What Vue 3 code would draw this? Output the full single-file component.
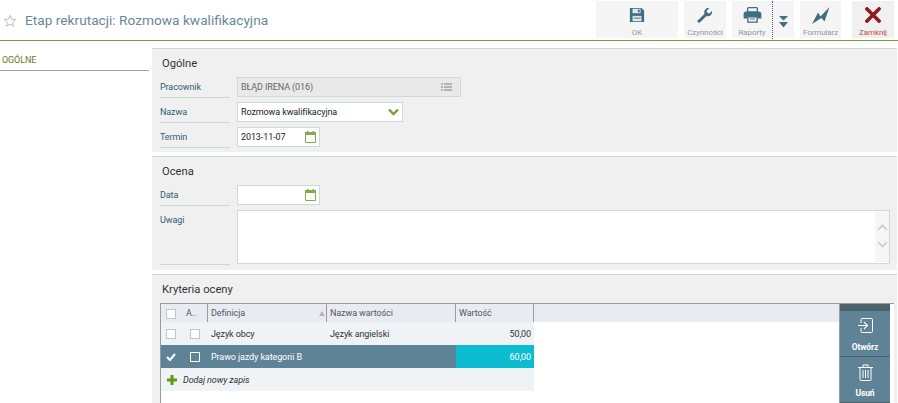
<script setup>
const rows = [
  { sel: false, def: 'Język obcy', name: 'Język angielski', val: '50,00' },
  { sel: true, def: 'Prawo jazdy kategorii B', name: '', val: '60,00' }
]
</script>

<template>
  <div class="page">
    <header class="top">
      <svg class="star" width="14" height="14" viewBox="0 0 16 16"><path d="M8 1.500l1.900 4.400 4.700.4-3.600 3.100 1.100 4.600L8 11.600 3.900 14l1.100-4.600-3.600-3.100 4.700-.4z" fill="none" stroke="#b4bcc0" stroke-width="1.100"/></svg>
      <h1>Etap rekrutacji: Rozmowa kwalifikacyjna</h1>
      <div class="tools">
        <div class="tool w82">
          <svg width="16" height="16" viewBox="0 0 18 18"><path d="M1 1h13l3 3v13H1z" fill="#3f6e82"/><rect x="4" y="2" width="9" height="5" fill="#dfe7eb"/><rect x="10" y="3" width="2" height="3" fill="#3f6e82"/><rect x="4" y="10" width="10" height="6" fill="#dfe7eb"/><rect x="5" y="12" width="8" height="1" fill="#3f6e82"/></svg>
          <span>OK</span>
        </div>
        <div class="tool w42">
          <svg width="16" height="16" viewBox="0 0 18 18"><path d="M1.500 14.500l7-7a4.500 4.500 0 0 1 5.500-6l-3 2.500.5 2.500 2.500.7 2.700-2.700a4.500 4.500 0 0 1-6 5.500l-7 7a1.700 1.700 0 0 1-2.700-2.500z" fill="#3f6e82"/></svg>
          <span>Czynności</span>
        </div>
        <div class="tool w62 split">
          <div class="main-part">
            <svg width="19" height="16" viewBox="0 0 20 18"><rect x="4.500" y="0.750" width="11" height="5" rx="1" fill="none" stroke="#3f6e82" stroke-width="1.500"/><path d="M3 5h14a3 3 0 0 1 3 3v5h-4v-3H4v3H0V8a3 3 0 0 1 3-3z" fill="#3f6e82"/><path d="M4.750 11h10.500v6H4.750z" fill="none" stroke="#3f6e82" stroke-width="1.500"/><rect x="7" y="13" width="6" height="1" fill="#3f6e82"/></svg>
            <span>Raporty</span>
          </div>
          <div class="more">
            <svg width="9" height="13" viewBox="0 0 9 13"><path d="M0 1h9L4.500 5.500zM0 7h9L4.500 12.500z" fill="#3f6e82"/></svg>
          </div>
        </div>
        <div class="tool w41 push">
          <svg width="18" height="17" viewBox="0 0 18 17"><path d="M0 17L6 5.500l2.500 4L17.500 0l-5 14.500L9.500 11z" fill="#3f6e82"/></svg>
          <span class="f">Formularz</span>
        </div>
        <div class="tool w42 close">
          <svg width="16" height="16" viewBox="0 0 16 16"><path d="M2 2l12 12M14 2L2 14" stroke="#8e1b22" stroke-width="3.600" stroke-linecap="square"/></svg>
          <span>Zamknij</span>
        </div>
      </div>
    </header>

    <div class="body">
      <aside class="side"><div class="tab">OGÓLNE</div></aside>
      <main class="main">
        <section class="sec one">
          <h2>Ogólne</h2>
          <div class="row r1">
            <label>Pracownik</label>
            <div class="field ro wide">
              <span>BŁĄD IRENA (016)</span>
              <svg width="11" height="8" viewBox="0 0 11 8"><path d="M0 1h2M3 1h8M0 4h2M3 4h8M0 7h2M3 7h8" stroke="#9aa3a7" stroke-width="1.300"/></svg>
            </div>
          </div>
          <div class="row">
            <label>Nazwa</label>
            <div class="field mid">
              <span>Rozmowa kwalifikacyjna</span>
              <svg width="11" height="8" viewBox="0 0 11 8"><path d="M1 1.500l4.500 4.500L10 1.500" fill="none" stroke="#75a136" stroke-width="2.400"/></svg>
            </div>
          </div>
          <div class="row">
            <label>Termin</label>
            <div class="field date">
              <span>2013-11-07</span>
              <svg width="11" height="12" viewBox="0 0 11 12" class="cal"><path d="M.5 1.500h10v10H.5z" fill="#fff" stroke="#7fae4b"/><path d="M0 1h2V0h1.500v1h4V0H9v1h2v3H0z" fill="#7fae4b"/></svg>
            </div>
          </div>
        </section>

        <section class="sec two">
          <h2>Ocena</h2>
          <div class="row">
            <label>Data</label>
            <div class="field date">
              <span></span>
              <svg width="11" height="12" viewBox="0 0 11 12" class="cal"><path d="M.5 1.500h10v10H.5z" fill="#fff" stroke="#7fae4b"/><path d="M0 1h2V0h1.500v1h4V0H9v1h2v3H0z" fill="#7fae4b"/></svg>
            </div>
          </div>
          <div class="row tall">
            <label>Uwagi</label>
            <div class="field area">
              <div class="scroll">
                <svg width="11" height="7" viewBox="0 0 11 7"><path d="M1 6l4.500-4.500L10 6" fill="none" stroke="#c8cccd" stroke-width="1.600"/></svg>
                <svg width="11" height="7" viewBox="0 0 11 7"><path d="M1 1l4.500 4.500L10 1" fill="none" stroke="#c8cccd" stroke-width="1.600"/></svg>
              </div>
            </div>
          </div>
        </section>

        <section class="sec three">
          <h2>Kryteria oceny</h2>
          <div class="gridwrap">
            <div class="grid">
              <div class="ghead">
                <div class="c-check"><i class="box"></i></div>
                <div class="c-a">A..</div>
                <div class="c-def">Definicja<em class="sort"></em></div>
                <div class="c-name">Nazwa wartości</div>
                <div class="c-val">Wartość</div>
                <div class="c-rest"></div>
              </div>
              <div v-for="r in rows" :key="r.def" class="grow" :class="{ sel: r.sel }">
                <div class="d-check">
                  <svg v-if="r.sel" width="10" height="8" viewBox="0 0 10 8"><path d="M1 4l3 3 5-6" fill="none" stroke="#fff" stroke-width="2"/></svg>
                  <i v-else class="box"></i>
                </div>
                <div class="d-a"><i class="box"></i></div>
                <div class="d-def">{{ r.def }}</div>
                <div class="d-name">{{ r.name }}</div>
                <div class="d-val">{{ r.val }}</div>
              </div>
              <div class="gadd">
                <svg width="10" height="10" viewBox="0 0 10 10"><path d="M3.500 0h3v3.500H10v3H6.500V10h-3V6.500H0v-3h3.500z" fill="#5f9a12"/></svg>
                <span>Dodaj nowy zapis</span>
              </div>
            </div>
            <div class="actions">
              <div class="cap"></div>
              <div class="act">
                <svg width="15" height="15" viewBox="0 0 15 15"><path d="M3 5V1.500a1 1 0 0 1 1-1h9.500a1 1 0 0 1 1 1v12a1 1 0 0 1-1 1H4a1 1 0 0 1-1-1V10" fill="none" stroke="#fff" stroke-width="1"/><path d="M0 7.500h9M6 4l3.500 3.500L6 11" fill="none" stroke="#fff" stroke-width="1.100"/></svg>
                <span>Otwórz</span>
              </div>
              <div class="act del">
                <svg width="15" height="17" viewBox="0 0 15 17"><path d="M0 3.500h15M5 3V1h5v2M2 4v11.500a1 1 0 0 0 1 1h9a1 1 0 0 0 1-1V4M5 6v8M7.500 6v8M10 6v8" fill="none" stroke="#fff" stroke-width="1"/></svg>
                <span>Usuń</span>
              </div>
            </div>
          </div>
        </section>
      </main>
    </div>
  </div>
</template>

<style>
html, body { margin: 0; background: #fff; overflow: hidden; }
</style>

<style scoped>
.page { width: 898px; height: 403px; overflow: hidden; font-family: Roboto, "Open Sans", sans-serif; font-size: 9px; letter-spacing: -0.100px; color: #333; background: #fff; }
.top { height: 40px; border-bottom: 1px solid #7a9e35; display: flex; align-items: center; position: relative; }
.star { margin-left: 3px; margin-top: 1px; }
h1 { margin: 0 0 0 8px; font-size: 13.700px; letter-spacing: 0; font-weight: 400; color: #6a8796; flex: 1; }
.tools { display: flex; height: 38px; align-self: flex-start; margin-top: 1px; margin-right: 4px; gap: 6px; }
.tool { background: #f5f5f5; display: flex; flex-direction: column; align-items: center; padding-top: 6px; box-sizing: border-box; height: 37px; gap: 2px; }
.tool span { font-size: 8px; color: #8a9aa3; line-height: 11px; margin-top: 2px; }
.tool span.f { margin-top: 1px; }
.w82 { width: 82px; }
.w42 { width: 42px; }
.w41 { width: 41px; }
.w62 { width: 62px; }
.push { margin-right: 5px; }
.split { flex-direction: row; padding: 0; align-items: stretch; gap: 0; }
.main-part { width: 41px; display: flex; flex-direction: column; align-items: center; padding-top: 6px; border-right: 1px dotted #3c6a80; height: 38px; box-sizing: border-box; gap: 2px; }
.more { flex: 1; display: flex; align-items: center; justify-content: center; padding-top: 3px; }
.close { background: #f0f0f0; }
.close span { color: #c0484c; }
.body { display: flex; padding-top: 7px; }
.side { width: 149px; flex: none; }
.tab { height: 23px; border-bottom: 1px solid #9aa6ac; color: #6b7a1e; padding: 5px 0 0 2px; box-sizing: border-box; line-height: 14px; }
.main { flex: 1; margin-left: 3px; margin-right: 1px; display: flex; flex-direction: column; gap: 4px; }
.sec { background: #f0f0f0; border-top: 1px solid #c8d8dc; padding: 0 3px 0 8px; box-sizing: border-box; }
.one { height: 104px; }
.two { height: 114px; }
.three { height: 130px; }
h2 { margin: 0 0 6px; font-size: 11.200px; letter-spacing: 0; font-weight: 400; color: #333; line-height: 15px; padding: 7px 0 0 2px; }
.row { display: flex; margin: 0 4px 5px 0; gap: 7px; height: 20px; }
label { width: 70px; border-bottom: 1px solid #c8dad6; color: #2f6070; line-height: 21px; height: 21px; box-sizing: border-box; flex: none; }
.field { border: 1px solid #c9dcd7; background: #fff; display: flex; align-items: center; justify-content: space-between; box-sizing: border-box; height: 20px; padding: 0 3px; color: #222; }
.ro { background: #e9e9e9; color: #666; }
.wide { width: 224px; flex: none; padding-right: 8px; }
.mid { width: 166px; }
.date { width: 83px; }
.row.tall { height: 54px; }
.tall label { height: 55px; }
.area { flex: 1; height: 54px; align-items: flex-start; justify-content: flex-end; padding: 0; }
.scroll { width: 14px; height: 51px; background: #f6f6f6; display: flex; flex-direction: column; align-items: center; gap: 10px; padding-top: 13px; box-sizing: border-box; }
.gridwrap { display: flex; height: 100px; background: #fff; padding-right: 4px; border-top: 1px solid #9a9aa2; border-left: 1px solid #9a9aa2; box-sizing: border-box; }
.grid { flex: 1; background: #fff; }
.ghead { display: flex; height: 18px; background: #e8ebef; color: #556; line-height: 19px; }
.ghead > div { box-sizing: border-box; border-right: 1px solid #9a9aa2; }
.c-check { width: 0; position: relative; border: 0 !important; }
.c-check .box { position: absolute; left: 5px; top: 5px; }
.c-a { width: 47px; padding-left: 25px; }
.c-def { width: 119px; padding-left: 3px; position: relative; }
.c-name { width: 129px; padding-left: 3px; }
.c-val { width: 78px; padding-left: 3px; }
.c-rest { flex: 1; border: 0 !important; }
.sort { position: absolute; right: 1px; top: 7px; border: 3.500px solid transparent; border-top: 0; border-bottom: 5px solid #b0b4b8; }
.box { display: inline-block; width: 8px; height: 8px; border: 1px solid #c0c6c8; background: #fff; }
.grow { display: flex; width: 373px; height: 23px; align-items: center; background: #eff3f6; color: #333; }
.grow.sel { background: #5f8396; color: #fff; }
.d-check { width: 29px; padding-left: 5px; box-sizing: border-box; display: flex; }
.d-a { width: 18px; display: flex; }
.d-def { width: 119px; padding: 1px 0 0 3px; box-sizing: border-box; white-space: nowrap; }
.d-name { width: 129px; padding: 1px 0 0 3px; box-sizing: border-box; }
.d-val { width: 78px; height: 100%; box-sizing: border-box; text-align: right; padding-right: 3px; line-height: 24px; }
.sel .d-val { background: #0cbcd0; }
.sel .box { background: transparent; border-color: #fff; }
.gadd { width: 373px; height: 23px; background: #eff3f6; display: flex; align-items: center; padding-left: 6px; box-sizing: border-box; gap: 6px; font-style: italic; color: #333; }
.actions { width: 51px; flex: none; border-left: 1px solid #9a9aa2; background: #5f8396; color: #fff; font-weight: 700; box-sizing: border-box; display: flex; flex-direction: column; }
.cap { height: 7px; background: #4c636c; }
.act { height: 46px; display: flex; flex-direction: column; align-items: center; padding-top: 7px; box-sizing: border-box; font-size: 8.500px; gap: 9px; border-bottom: 1px solid #4c636c; line-height: 11px; }
.del { gap: 7px; }
</style>
